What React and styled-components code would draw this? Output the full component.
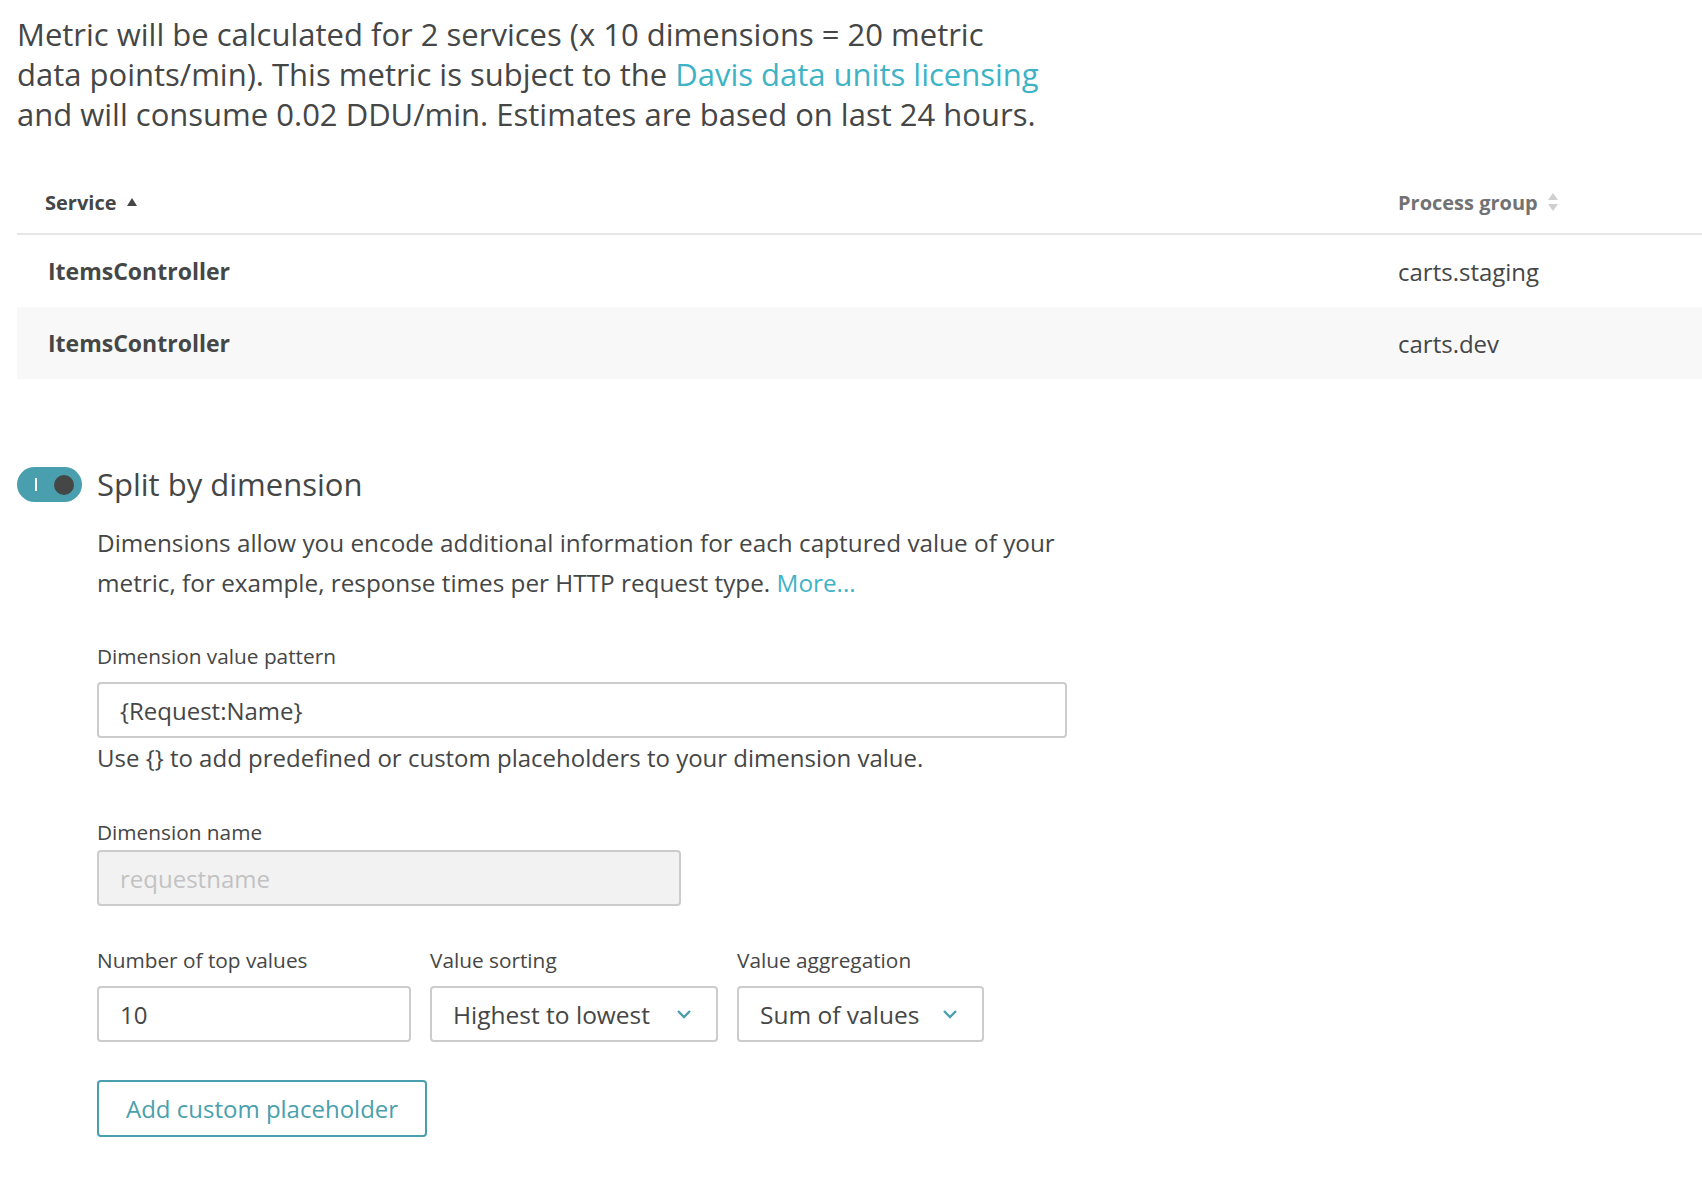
import React from 'react';
import styled, { createGlobalStyle } from 'styled-components';

const GlobalStyle = createGlobalStyle`
  html, body {
    margin: 0;
    padding: 0;
    background: #fff;
  }

  body {
    font-family: 'Open Sans', 'Noto Sans', sans-serif;
    color: #454646;
  }
`;

const Page = styled.div`
  padding: 14px 0 48px 17px;
  overflow: hidden;
`;

const Intro = styled.p`
  margin: 0;
  font-size: 31px;
  line-height: 40px;
  white-space: nowrap;
`;

const Link = styled.a`
  color: #3fb3c6;
  text-decoration: none;
`;

const Table = styled.div`
  margin-top: 37px;
  width: 100%;
`;

const HeaderRow = styled.div`
  display: grid;
  grid-template-columns: 1fr 304px;
  height: 62px;
  align-items: center;
  border-bottom: 2px solid #e6e6e6;
`;

const HeaderCell = styled.div`
  display: flex;
  align-items: center;
  gap: 9px;
  padding-left: ${(p) => (p.first ? '28px' : '0')};
  font-size: 20px;
  font-weight: 700;
  color: ${(p) => (p.active ? '#454646' : '#727272')};
`;

const Row = styled.div`
  display: grid;
  grid-template-columns: 1fr 304px;
  height: 72px;
  align-items: center;
  background: ${(p) => (p.striped ? '#f8f8f8' : '#fff')};
  font-size: 24px;
`;

const Cell = styled.div`
  padding-left: ${(p) => (p.first ? '31px' : '0')};
  font-weight: ${(p) => (p.bold ? 700 : 400)};
  font-size: ${(p) => (p.bold ? '23px' : '24px')};
`;

const SortIcon = ({ active }) =>
  active ? (
    <svg width="12" height="10" viewBox="0 0 12 10">
      <path d="M6 1 L11 9 L1 9 Z" fill="#454646" />
    </svg>
  ) : (
    <svg width="12" height="20" viewBox="0 0 12 20">
      <path d="M6 1 L11 8 L1 8 Z" fill="#cfcfcf" />
      <path d="M6 19 L11 12 L1 12 Z" fill="#cfcfcf" />
    </svg>
  );

const Section = styled.section`
  margin-top: 85px;
`;

const SectionHeader = styled.div`
  display: flex;
  align-items: center;
  gap: 15px;
`;

const Toggle = styled.div`
  position: relative;
  width: 65px;
  height: 35px;
  border-radius: 18px;
  background: #4a9fae;
  flex-shrink: 0;

  &:before {
    content: '';
    position: absolute;
    left: 18px;
    top: 11px;
    width: 2px;
    height: 13px;
    background: #fff;
  }

  &:after {
    content: '';
    position: absolute;
    right: 8px;
    top: 8px;
    width: 20px;
    height: 20px;
    border-radius: 50%;
    background: #454646;
  }
`;

const Title = styled.h2`
  margin: 0;
  font-size: 31px;
  font-weight: 400;
  line-height: 40px;
`;

const Body = styled.div`
  padding-left: 80px;
  margin-top: 19px;
`;

const Description = styled.p`
  margin: 0;
  max-width: 1000px;
  font-size: 24.3px;
  line-height: 40px;
`;

const Field = styled.div`
  display: flex;
  flex-direction: column;
  width: ${(p) => p.width || 'auto'};
  margin-top: ${(p) => p.top || '0'};
`;

const Label = styled.label`
  font-size: 20.8px;
  line-height: 28px;
  margin-bottom: ${(p) => p.gap || '12px'};
`;

const Input = styled.input`
  box-sizing: border-box;
  width: 100%;
  height: 56px;
  padding: 0 21px;
  border: 2px solid #cccccc;
  border-radius: 4px;
  font-family: inherit;
  font-size: 24px;
  color: #454646;
  background: #fff;
  outline: none;

  &:disabled {
    background: #f2f2f2;
    color: #c2c2c2;
  }

  &::placeholder {
    color: #c2c2c2;
    opacity: 1;
  }
`;

const Helper = styled.div`
  font-size: 24px;
  line-height: 40px;
`;

const FieldRow = styled.div`
  display: flex;
  gap: 19px;
  margin-top: 40px;
`;

const Select = styled.div`
  box-sizing: border-box;
  height: 56px;
  display: flex;
  align-items: center;
  justify-content: space-between;
  padding: 0 24px 0 21px;
  border: 2px solid #cccccc;
  border-radius: 4px;
  font-size: 24.5px;
  background: #fff;
`;

const Chevron = () => (
  <svg width="16" height="10" viewBox="0 0 16 10">
    <path d="M2 2 L8 8 L14 2" fill="none" stroke="#4a9fae" strokeWidth="2.4" />
  </svg>
);

const Button = styled.button`
  box-sizing: border-box;
  margin-top: 38px;
  height: 57px;
  padding: 0 27px;
  border: 2px solid #4a9fae;
  border-radius: 4px;
  background: #fff;
  font-family: inherit;
  font-size: 24px;
  color: #4a9fae;
  cursor: pointer;
`;

const rows = [
  { service: 'ItemsController', group: 'carts.staging' },
  { service: 'ItemsController', group: 'carts.dev' },
];

const App = () => (
  <Page>
    <GlobalStyle />
    <Intro>
      Metric will be calculated for 2 services (x 10 dimensions = 20 metric
      <br />
      data points/min). This metric is subject to the{' '}
      <Link href="#">Davis data units licensing</Link>
      <br />
      and will consume 0.02 DDU/min. Estimates are based on last 24 hours.
    </Intro>

    <Table>
      <HeaderRow>
        <HeaderCell first active>
          Service <SortIcon active />
        </HeaderCell>
        <HeaderCell>
          Process group <SortIcon />
        </HeaderCell>
      </HeaderRow>
      {rows.map((r, i) => (
        <Row key={r.group} striped={i % 2 === 1}>
          <Cell first bold>
            {r.service}
          </Cell>
          <Cell>{r.group}</Cell>
        </Row>
      ))}
    </Table>

    <Section>
      <SectionHeader>
        <Toggle />
        <Title>Split by dimension</Title>
      </SectionHeader>
      <Body>
        <Description>
          Dimensions allow you encode additional information for each captured value of your
          metric, for example, response times per HTTP request type. <Link href="#">More...</Link>
        </Description>

        <Field width="970px" top="39px">
          <Label gap="12px">Dimension value pattern</Label>
          <Input defaultValue="{Request:Name}" />
          <Helper>Use {'{}'} to add predefined or custom placeholders to your dimension value.</Helper>
        </Field>

        <Field width="584px" top="40px">
          <Label gap="4px">Dimension name</Label>
          <Input placeholder="requestname" disabled />
        </Field>

        <FieldRow>
          <Field width="314px">
            <Label>Number of top values</Label>
            <Input defaultValue="10" />
          </Field>
          <Field width="288px">
            <Label>Value sorting</Label>
            <Select>
              Highest to lowest <Chevron />
            </Select>
          </Field>
          <Field width="247px">
            <Label>Value aggregation</Label>
            <Select>
              Sum of values <Chevron />
            </Select>
          </Field>
        </FieldRow>

        <Button>Add custom placeholder</Button>
      </Body>
    </Section>
  </Page>
);

export default App;
